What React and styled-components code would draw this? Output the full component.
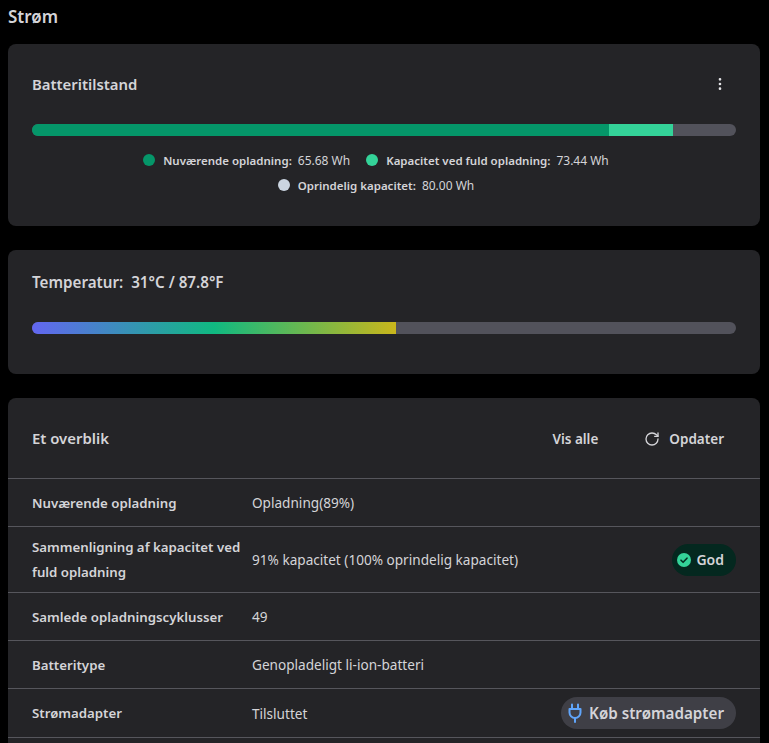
import React from 'react';
import styled, { createGlobalStyle } from 'styled-components';
import { MoreVertical, RotateCw } from 'lucide-react';

const GlobalStyle = createGlobalStyle`
	html, body {
		margin: 0;
		height: 100%;
		overflow: hidden;
		background: #000;
	}
	body {
		font-family: "Noto Sans", "Open Sans", sans-serif;
		color: #d4d4d8;
	}
	* {
		box-sizing: border-box;
	}
`;

const Page = styled.div`
	height: 100vh;
	overflow: hidden;
	padding: 0 9px 0 8px;
`;

const PageTitle = styled.h1`
	margin: 0;
	height: 44px;
	padding-top: 5px;
	font-size: 17px;
	line-height: 24px;
	font-weight: 600;
	color: #d4d4d8;
`;

const Card = styled.section`
	background: #242427;
	border-radius: 8px;
	margin-bottom: 24px;
	height: ${(p) => p.$height || 'auto'};
`;

const CardBody = styled.div`
	padding: ${(p) => p.$top || '28px'} 24px 0;
`;

const CardHeader = styled.div`
	display: flex;
	align-items: center;
	justify-content: space-between;
	height: 24px;
`;

const CardTitle = styled.h2`
	margin: 0;
	font-size: ${(p) => p.$size || '14.9px'};
	line-height: 24px;
	font-weight: 600;
	color: #d4d4d8;
	white-space: pre;
`;

const MenuButton = styled.span`
	display: flex;
	margin-right: 8px;
	color: #e4e4e7;
`;

const Track = styled.div`
	display: flex;
	height: 12px;
	margin-top: ${(p) => p.$top};
	border-radius: 6px;
	overflow: hidden;
	background: #52525b;
`;

const Segment = styled.div`
	background: ${(p) => p.$color};
`;

const Legend = styled.div`
	display: flex;
	flex-wrap: wrap;
	justify-content: center;
	row-gap: 7px;
	margin: 15px 0 0 84px;
	width: 520px;
`;

const LegendItem = styled.div`
	display: flex;
	align-items: center;
	height: 18px;
	margin: 0 8px;
	font-size: 12px;
	white-space: nowrap;
`;

const Dot = styled.span`
	width: 12px;
	height: 12px;
	margin-right: 8px;
	border-radius: 50%;
	background: ${(p) => p.$color};
`;

const LegendLabel = styled.span`
	font-size: 11.5px;
	font-weight: 600;
	margin-right: 6px;
`;

const OverviewHeader = styled.div`
	display: flex;
	align-items: center;
	height: 80px;
	padding: 0 36px 0 24px;
`;

const OverviewActions = styled.div`
	display: flex;
	align-items: center;
	margin-left: auto;
	padding-top: 1px;
`;

const TextButton = styled.span`
	display: flex;
	align-items: center;
	gap: 9px;
	margin-left: ${(p) => p.$left || '0'};
	font-size: 13.5px;
	font-weight: 600;
	color: #d4d4d8;
`;

const Row = styled.div`
	display: flex;
	align-items: center;
	height: ${(p) => p.$height || '48px'};
	padding: 0 24px;
	border-top: 1px solid #56565c;
`;

const RowLabel = styled.div`
	width: 220px;
	padding: 1px 8px 0 0;
	font-size: 13.25px;
	line-height: 25px;
	font-weight: 600;
	color: #d4d4d8;
`;

const RowValue = styled.div`
	flex: 1;
	font-size: 13.6px;
	color: #d4d4d8;
`;

const Pill = styled.span`
	display: flex;
	align-items: center;
	height: 32px;
	border-radius: 16px;
	padding: ${(p) => p.$padding};
	gap: ${(p) => p.$gap};
	background: ${(p) => p.$bg};
	font-size: ${(p) => p.$size};
	font-weight: 600;
	color: #d4d4d8;
`;

function CheckBadge() {
	return (
		<svg width="14" height="14" viewBox="0 0 14 14">
			<circle cx="7" cy="7" r="7" fill="#34d399" />
			<path d="M4 7.2l2.1 2.1L10 5.2" fill="none" stroke="#052e22" strokeWidth="1.6" strokeLinecap="round" strokeLinejoin="round" />
		</svg>
	);
}

function PlugIcon() {
	return (
		<svg width="14" height="20" viewBox="0 0 14 20" fill="none" stroke="#60a5fa" strokeWidth="2" strokeLinecap="round" strokeLinejoin="round">
			<path d="M4 1.5v4.5M10 1.5v4.5" />
			<path d="M1.5 6h11v3.5a5.5 5.5 0 0 1-11 0z" />
			<path d="M7 15v4" />
		</svg>
	);
}

const ROWS = [
	{ label: 'Nuværende opladning', value: 'Opladning(89%)' },
	{
		label: 'Sammenligning af kapacitet ved fuld opladning',
		value: '91% kapacitet (100% oprindelig kapacitet)',
		height: '66px',
		extra: (
			<Pill $bg="#04281f" $padding="0 12px 0 5px" $gap="5px" $size="14px">
				<CheckBadge />
				God
			</Pill>
		),
	},
	{ label: 'Samlede opladningscyklusser', value: '49' },
	{ label: 'Batteritype', value: 'Genopladeligt li-ion-batteri' },
	{
		label: 'Strømadapter',
		value: 'Tilsluttet',
		height: '49px',
		extra: (
			<Pill $bg="#3f3f46" $padding="0 12px 0 7px" $gap="7px" $size="15.2px">
				<PlugIcon />
				Køb strømadapter
			</Pill>
		),
	},
	{ label: '', value: '' },
];

export default function App() {
	return (
		<Page>
			<GlobalStyle />
			<PageTitle>Strøm</PageTitle>

			<Card $height="182px">
				<CardBody>
					<CardHeader>
						<CardTitle>Batteritilstand</CardTitle>
						<MenuButton><MoreVertical size={16} /></MenuButton>
					</CardHeader>
					<Track $top="28px">
						<Segment $color="#059669" style={{ width: '82%' }} />
						<Segment $color="#34d399" style={{ width: '9%' }} />
					</Track>
					<Legend>
						<LegendItem>
							<Dot $color="#059669" />
							<LegendLabel>Nuværende opladning:</LegendLabel>65.68 Wh
						</LegendItem>
						<LegendItem>
							<Dot $color="#34d399" />
							<LegendLabel>Kapacitet ved fuld opladning:</LegendLabel>73.44 Wh
						</LegendItem>
						<LegendItem>
							<Dot $color="#cbd5e1" />
							<LegendLabel>Oprindelig kapacitet:</LegendLabel>80.00 Wh
						</LegendItem>
					</Legend>
				</CardBody>
			</Card>

			<Card $height="124px">
				<CardBody $top="20px">
					<CardTitle $size="15.2px">{'Temperatur:  31°C / 87.8°F'}</CardTitle>
					<Track $top="28px">
						<Segment
							$color="linear-gradient(90deg, #6366f1 0%, #10b981 50%, #c9b61c 100%)"
							style={{ width: '51.7%' }}
						/>
					</Track>
				</CardBody>
			</Card>

			<Card>
				<OverviewHeader>
					<CardTitle>Et overblik</CardTitle>
					<OverviewActions>
						<TextButton>Vis alle</TextButton>
						<TextButton $left="46px"><RotateCw size={16} />Opdater</TextButton>
					</OverviewActions>
				</OverviewHeader>
				{ROWS.map((row) => (
					<Row key={row.label} $height={row.height}>
						<RowLabel>{row.label}</RowLabel>
						<RowValue>{row.value}</RowValue>
						{row.extra}
					</Row>
				))}
			</Card>
		</Page>
	);
}
